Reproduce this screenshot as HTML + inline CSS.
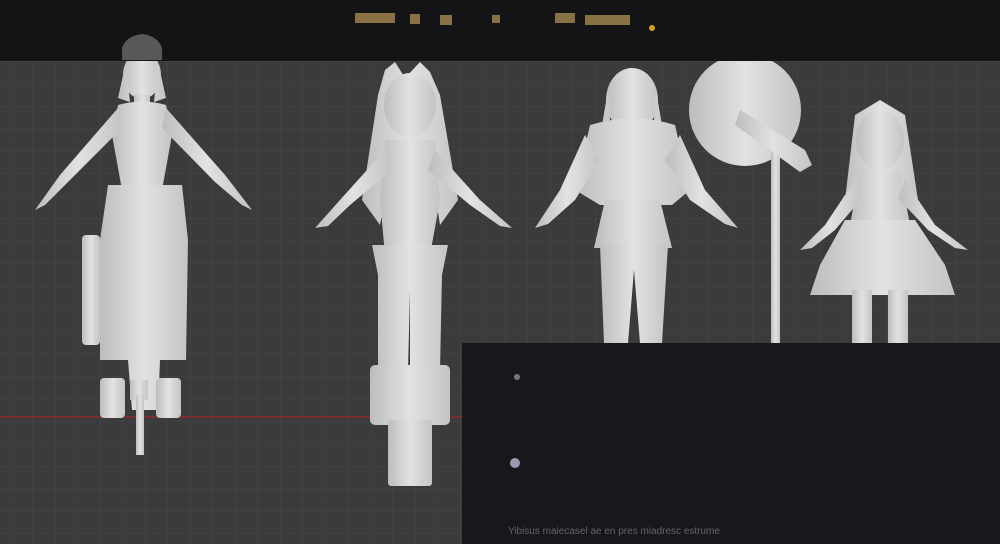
<!DOCTYPE html>
<html><head><meta charset="utf-8"><style>
html,body{margin:0;padding:0;width:1000px;height:544px;overflow:hidden;background:#3b3b3d;font-family:"Liberation Sans",sans-serif}
</style></head><body>
<svg width="1000" height="544" viewBox="0 0 1000 544" xmlns="http://www.w3.org/2000/svg">
<defs>
<pattern id="g" width="22.5" height="22.5" patternUnits="userSpaceOnUse" x="10" y="61">
<path d="M0 0H22.5M0 0V22.5" stroke="#47474a" stroke-width="1" fill="none"/>
</pattern>
<linearGradient id="w" x1="0" x2="1"><stop offset="0" stop-color="#bdbdbd"/><stop offset=".5" stop-color="#e2e2e2"/><stop offset="1" stop-color="#c4c4c4"/></linearGradient>
</defs>
<rect width="1000" height="544" fill="#3b3b3d"/>
<rect width="1000" height="544" fill="url(#g)"/>
<line x1="0" y1="417" x2="462" y2="417" stroke="#8a2a2a" stroke-width="1.5"/>
<g fill="url(#w)" stroke="none">
<!-- figure 1 -->
<ellipse cx="142" cy="75" rx="19" ry="24"/>
<path d="M126 62 L118 98 L130 102 Z M158 62 L166 98 L154 102Z"/>
<rect x="134" y="95" width="16" height="12"/>
<path d="M118 105 Q142 98 166 105 L172 135 L162 190 L122 190 L112 135Z"/>
<path d="M118 108 L60 175 L35 210 L45 205 L70 180 L122 128Z"/>
<path d="M166 108 L225 175 L252 210 L242 205 L215 182 L162 128Z"/>
<path d="M108 185 L182 185 L188 240 L186 360 L160 360 L158 410 L132 410 L128 360 L100 360 L100 240Z"/>
<rect x="82" y="235" width="18" height="110" rx="4"/>
<rect x="100" y="378" width="25" height="40" rx="4"/>
<rect x="156" y="378" width="25" height="40" rx="4"/>
<rect x="130" y="380" width="18" height="20"/>
<rect x="136" y="395" width="8" height="60"/>
<!-- figure 2 -->
<path d="M385 70 L395 62 L405 78 L420 62 L430 72 L440 95 L458 200 L440 225 L430 160 L392 160 L380 225 L362 200 L378 95Z"/>
<ellipse cx="410" cy="105" rx="26" ry="32"/>
<path d="M385 140 L435 140 L440 200 L430 255 L385 255 L380 200Z"/>
<path d="M385 150 L340 200 L315 228 L328 226 L350 205 L392 170Z"/>
<path d="M435 150 L480 200 L512 228 L500 226 L470 205 L428 170Z"/>
<path d="M372 245 L448 245 L442 275 L440 370 L410 370 L410 290 L408 370 L378 370 L378 275Z"/>
<rect x="370" y="365" width="80" height="60" rx="5"/>
<rect x="388" y="420" width="44" height="66" rx="3"/>
<!-- figure 3 -->
<ellipse cx="632" cy="100" rx="26" ry="32"/>
<path d="M608 90 L596 160 L612 150Z M656 90 L668 160 L652 150Z"/>
<path d="M590 125 Q632 112 675 125 L690 190 L672 205 L600 205 L575 190Z"/>
<path d="M585 135 L560 190 L535 228 L548 224 L575 200 L600 160Z"/>
<path d="M680 135 L705 190 L738 228 L725 224 L690 200 L665 160Z"/>
<path d="M605 200 L660 200 L672 248 L594 248Z"/>
<path d="M600 245 L668 245 L662 343 L640 343 L634 270 L628 343 L604 343Z"/>
<!-- saw -->
<circle cx="745" cy="110" r="56"/>
<rect x="771" y="140" width="9" height="203"/>
<path d="M740 110 L805 150 L812 165 L800 172 L735 125Z"/>
<!-- figure 4 -->
<path d="M855 115 L880 100 L905 115 L918 200 L905 210 L860 210 L845 200Z"/>
<ellipse cx="880" cy="140" rx="24" ry="30"/>
<path d="M860 170 L900 170 L910 225 L850 225Z"/>
<path d="M855 180 L825 225 L800 250 L812 248 L835 230 L862 198Z"/>
<path d="M905 180 L935 225 L968 250 L955 248 L928 230 L898 198Z"/>
<path d="M845 220 L915 220 L945 265 L955 295 L810 295 L820 265Z"/>
<rect x="852" y="290" width="20" height="53"/>
<rect x="888" y="290" width="20" height="53"/>
</g>
<rect x="0" y="0" width="1000" height="61" fill="#141316"/>
<path d="M122 60 L122 48 Q126 36 142 34 Q158 36 162 48 L162 60Z" fill="#58585a"/>
<rect x="462" y="343" width="538" height="201" fill="#18171b"/>
<g fill="#b89a5a" opacity="0.7">
<rect x="355" y="13" width="40" height="10"/><rect x="410" y="14" width="10" height="10"/><rect x="440" y="15" width="12" height="10"/><rect x="492" y="15" width="8" height="8"/><rect x="555" y="13" width="20" height="10"/><rect x="585" y="15" width="45" height="10"/>
</g>
<circle cx="652" cy="28" r="3" fill="#d8a020"/>
<circle cx="517" cy="377" r="3" fill="#777"/>
<circle cx="515" cy="463" r="5" fill="#9a9ab0"/>
<text x="508" y="534" font-size="10" fill="#666">Yibisus maiecasel ae en pres miadresc estrume</text>
</svg>
</body></html>
